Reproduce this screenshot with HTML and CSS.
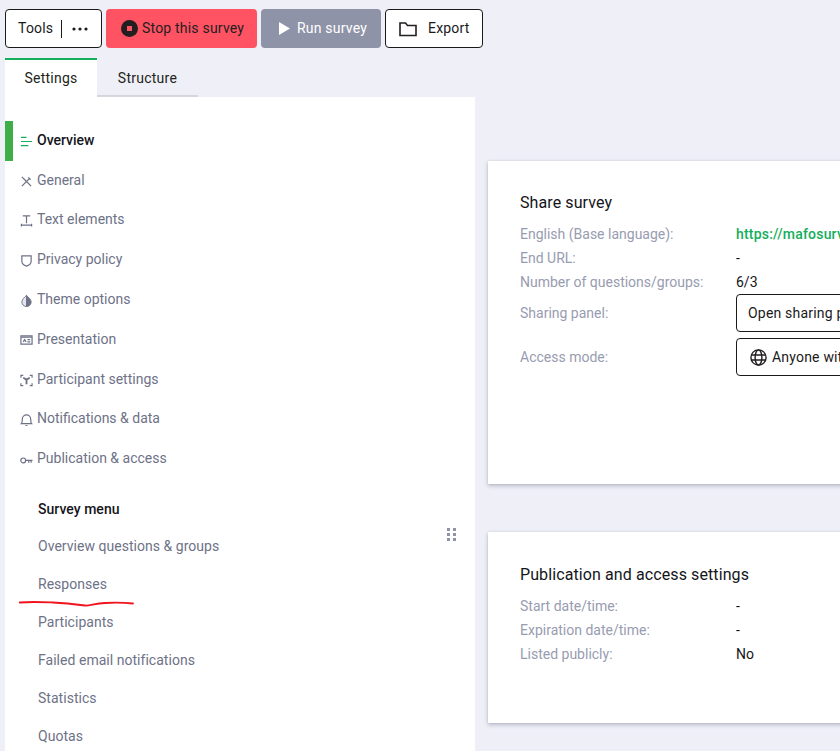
FILE: index.html
```html
<!DOCTYPE html>
<html lang="en">
<head>
<meta charset="utf-8">
<title>Survey overview</title>
<link rel="stylesheet" href="styles.css">
</head>
<body>
<div class="page">
  <div class="toolbar">
    <button class="btn btn-outline btn-tools"><span>Tools</span><i class="tools-sep"></i>
      <svg class="dots" width="16" height="4" viewBox="0 0 16 4"><circle cx="2" cy="2" r="1.6"/><circle cx="8" cy="2" r="1.6"/><circle cx="14" cy="2" r="1.6"/></svg>
    </button>
    <button class="btn btn-stop">
      <svg width="17" height="17" viewBox="0 0 17 17"><circle cx="8.5" cy="8.5" r="8.5" fill="#231f20"/><rect x="6" y="6" width="5" height="5" fill="#ff5263"/></svg>
      <span>Stop this survey</span></button>
    <button class="btn btn-run">
      <svg width="11" height="13" viewBox="0 0 11 13"><path d="M0 0L11 6.5L0 13Z" fill="#fff"/></svg>
      <span>Run survey</span></button>
    <button class="btn btn-outline btn-export">
      <svg width="18" height="16" viewBox="0 0 18 16" fill="none"><path d="M1 14.5V2h5.5l2 2.5H17v10Z" stroke="#231f20" stroke-width="1.6"/></svg>
      <span>Export</span></button>
  </div>
  <div class="tabs">
    <div class="tab tab-active">Settings</div>
    <div class="tab">Structure</div>
  </div>
  <div class="columns">
    <aside class="sidebar">
      <nav class="nav">
        <a class="nav-item nav-active">
          <svg class="ico" viewBox="0 0 14 14" fill="none" stroke="#14ae5c" stroke-width="1.3"><path d="M1 2.5H7M1 7H13M1 11.5H9"/></svg>
          Overview</a>
        <a class="nav-item">
          <svg class="ico" viewBox="0 0 14 14" fill="none" stroke="#6e7287" stroke-width="1.3"><path d="M2 12L10 4M4 4L12 12M9 2.5L11.5 5M2 2L5 5"/></svg>
          General</a>
        <a class="nav-item">
          <svg class="ico" viewBox="0 0 14 14" fill="none" stroke="#6e7287" stroke-width="1.3"><path d="M3 2H11M7 2V10M1.5 12H12.5M1.5 10.5V13.5M12.5 10.5V13.5"/></svg>
          Text elements</a>
        <a class="nav-item">
          <svg class="ico" viewBox="0 0 14 14" fill="none" stroke="#6e7287" stroke-width="1.3"><path d="M2 2H12V8C12 10.5 9.5 12 7 13C4.5 12 2 10.5 2 8Z"/></svg>
          Privacy policy</a>
        <a class="nav-item">
          <svg class="ico" viewBox="0 0 14 14"><path d="M7 1.5C4.5 4 2 6 2 8.5A5 5 0 0 0 7 13.5Z" fill="#e4e5ec" stroke="#6e7287"/><path d="M7 1.5C9.5 4 12 6 12 8.5A5 5 0 0 1 7 13.5Z" fill="#6e7287" stroke="#6e7287"/></svg>
          Theme options</a>
        <a class="nav-item">
          <svg class="ico" viewBox="0 0 14 14" fill="none" stroke="#6e7287" stroke-width="1.3"><path d="M1 2H13V11H1ZM1 3.5H13M3.5 8.5L5 6L6.5 8.5M8 6H11M8 8.5H11"/></svg>
          Presentation</a>
        <a class="nav-item">
          <svg class="ico" viewBox="0 0 14 14" fill="none" stroke="#6e7287" stroke-width="1.3"><path d="M1 4V1.5H3.5M10.5 1.5H13V4M1 10V12.5H3.5M10.5 12.5H13V10"/><path d="M3.5 4L7 6L10.5 4M7 6V11" stroke-width="2"/></svg>
          Participant settings</a>
        <a class="nav-item">
          <svg class="ico" viewBox="0 0 14 14" fill="none" stroke="#6e7287" stroke-width="1.3"><path d="M1.5 11.5H12.5C11.5 10.5 11.5 9 11.5 6.5A4.5 4.5 0 0 0 2.5 6.5C2.5 9 2.5 10.5 1.5 11.5ZM6 13.5H8"/></svg>
          Notifications &amp; data</a>
        <a class="nav-item">
          <svg class="ico" viewBox="0 0 14 14" fill="none" stroke="#6e7287" stroke-width="1.3"><circle cx="3.5" cy="8" r="2.6"/><path d="M6 8H13.5M9.5 8V10.5M12 8V10.5"/></svg>
          Publication &amp; access</a>
      </nav>
      <div class="menu">
        <div class="menu-row menu-title">Survey menu</div>
        <a class="menu-row">Overview questions &amp; groups</a>
        <a class="menu-row">Responses</a>
        <a class="menu-row">Participants</a>
        <a class="menu-row">Failed email notifications</a>
        <a class="menu-row">Statistics</a>
        <a class="menu-row">Quotas</a>
        <svg class="grip" width="10" height="14" viewBox="0 0 10 14" fill="#8f93a8"><rect width="3" height="3"/><rect x="6" width="3" height="3"/><rect y="5" width="3" height="3"/><rect x="6" y="5" width="3" height="3"/><rect y="10" width="3" height="3"/><rect x="6" y="10" width="3" height="3"/></svg>
      </div>
      <svg class="scribble" width="116" height="8" viewBox="0 0 116 8" fill="none"><path d="M0.5 2.5C12 1.5 22 2 34 2.5C44 3 54 4 66 5.5C70 6 76 3.5 86 3C96 2.5 104 2.5 114 3.5" stroke="#f0131e" stroke-width="1.8" stroke-linecap="round"/></svg>
    </aside>
    <main class="content">
      <section class="card card-share">
        <h2 class="card-title">Share survey</h2>
        <dl class="rows">
          <div class="row"><dt>English (Base language):</dt><dd class="link">https://mafosurvey.example</dd></div>
          <div class="row"><dt>End URL:</dt><dd>-</dd></div>
          <div class="row"><dt>Number of questions/groups:</dt><dd>6/3</dd></div>
          <div class="row row-btn"><dt>Sharing panel:</dt><dd><button class="btn-card">Open sharing panel</button></dd></div>
          <div class="row row-btn"><dt>Access mode:</dt><dd><button class="btn-card btn-globe">
            <svg width="17" height="17" viewBox="0 0 17 17" fill="none" stroke="#231f20" stroke-width="1.4"><circle cx="8.5" cy="8.5" r="7.6"/><ellipse cx="8.5" cy="8.5" rx="3.4" ry="7.6"/><path d="M1 6H16M1 11H16"/></svg>
            Anyone with the link</button></dd></div>
        </dl>
      </section>
      <section class="card card-pub">
        <h2 class="card-title">Publication and access settings</h2>
        <dl class="rows">
          <div class="row"><dt>Start date/time:</dt><dd>-</dd></div>
          <div class="row"><dt>Expiration date/time:</dt><dd>-</dd></div>
          <div class="row"><dt>Listed publicly:</dt><dd>No</dd></div>
        </dl>
      </section>
    </main>
  </div>
</div>
</body>
</html>
```
FILE: styles.css
```css
* { box-sizing: border-box; }
html, body { margin: 0; height: 100%; overflow: hidden; }
body { background: #eeeff7; color: #14151a; font-family: "Roboto", "Liberation Sans", sans-serif; font-size: 14px; }
.page { width: 840px; height: 751px; overflow: hidden; }

.toolbar { display: flex; gap: 4px; padding: 9px 0 0 5px; height: 58px; align-items: flex-start; }
.btn { height: 39px; border-radius: 4px; border: 1px solid transparent; display: flex; align-items: center; font: 450 14px "Roboto", sans-serif; letter-spacing: .2px; padding: 0 0 2px; }
.btn svg { margin-top: 2px; }
.btn-outline { background: #fff; border-color: #1a1a1a; color: #1a1a1a; }
.btn-tools { width: 97px; padding-left: 12px; }
.tools-sep { width: 1px; height: 18px; background: #1a1a1a; margin: 2px 10px 0 8px; }
.dots { fill: #1a1a1a; }
.btn-stop { width: 151px; background: #ff5263; color: #231f20; padding-left: 14px; gap: 4px; }
.btn-run { width: 120px; background: #8f93a8; color: #fff; padding-left: 17px; gap: 7px; }
.btn-export { width: 98px; padding-left: 13px; gap: 11px; }

.tabs { display: flex; height: 39px; padding-left: 5px; }
.tab { width: 101px; border-bottom: 2px solid #d6d6dc; display: flex; align-items: center; justify-content: center; font-weight: 450; color: #231f20; letter-spacing: .25px; padding-top: 3px; }
.tab-active { width: 92px; background: #fff; border-top: 2px solid #14ae5c; border-bottom: 0; padding: 0 0 2px; }

.columns { display: flex; padding-left: 5px; }
.sidebar { width: 470px; height: 654px; background: #fff; padding-top: 24px; position: relative; flex: none; }
.nav-item { display: flex; align-items: center; height: 39.8px; padding: 0 0 2px 15px; gap: 4px; color: #6e7287; letter-spacing: 0; }
.nav-active { color: #14151a; font-weight: 500; border-left: 8px solid #3fae49; padding-left: 7px; }
.ico { width: 13px; height: 13px; flex: none; margin-top: 3px; }
.menu { position: relative; margin-top: 11px; }
.menu-row { display: flex; align-items: center; height: 38px; padding-left: 33px; color: #6e7287; letter-spacing: .03px; }
.menu-title { color: #14151a; font-weight: 500; height: 37px; }
.grip { position: absolute; left: 442px; top: 38px; }
.scribble { position: absolute; left: 14px; top: 503px; }

.content { flex: none; width: 500px; padding-left: 13px; padding-top: 64px; }
.card { background: #fff; box-shadow: 0 2px 4px rgba(60, 60, 90, .28), 0 0 2px rgba(60, 60, 90, .12); padding: 32px 32px 0; width: 487px; }
.card-share { height: 323px; }
.card-pub { height: 191px; margin-top: 48px; padding-top: 33px; }
.card-title { margin: 0 0 9px; font-size: 16px; line-height: 20px; font-weight: 450; color: #14151a; letter-spacing: .1px; }
.rows { margin: 0; }
.row { display: flex; height: 24px; align-items: center; }
.row dt { width: 216px; flex: none; color: #989cb0; letter-spacing: 0; }
.row dd { margin: 0; color: #14151a; white-space: nowrap; }
.row dd.link { color: #14ae5c; font-weight: 500; letter-spacing: .2px; }
.row-btn { height: 38px; margin-bottom: 6px; }
.btn-card { height: 38px; width: 220px; background: #fff; border: 1px solid #1a1a1a; border-radius: 4px; display: flex; align-items: center; gap: 5px; padding: 0 11px; font: 450 14px "Roboto", sans-serif; color: #1a1a1a; letter-spacing: .2px; white-space: nowrap; }
.btn-globe { padding-left: 13px; }
```
